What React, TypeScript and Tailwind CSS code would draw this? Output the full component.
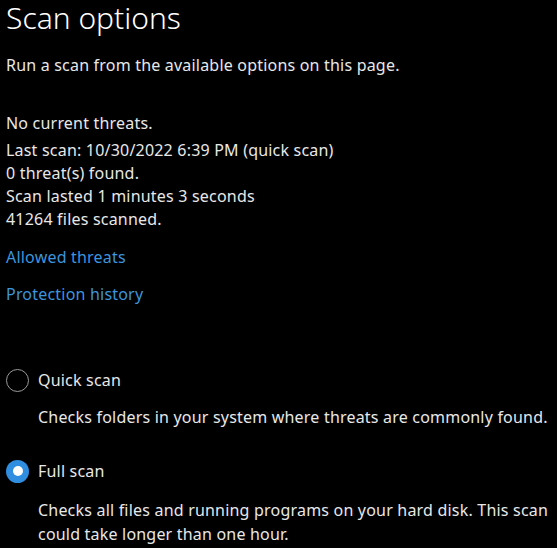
export default function App() {
  return (
    <div
      className="h-[548px] w-[557px] overflow-hidden bg-black pl-[6px] text-[16px] leading-[23px] tracking-[0.2px] text-[#e8e8e8]"
      style={{ fontFamily: '"Noto Sans", "Open Sans", sans-serif' }}
    >
      <h1 className="pt-[1px] text-[30px] font-light leading-[34px] tracking-normal text-white">Scan options</h1>
      <p className="mt-[19px]">Run a scan from the available options on this page.</p>

      <p className="mt-[35px]">No current threats.</p>
      <div className="mt-[4px]">
        <p>Last scan: 10/30/2022 6:39 PM (quick scan)</p>
        <p>0 threat(s) found.</p>
        <p>Scan lasted 1 minutes 3 seconds</p>
        <p>41264 files scanned.</p>
      </div>

      <a className="mt-[15px] block text-[#3c95dd]">Allowed threats</a>
      <a className="mt-[14px] block text-[#3c95dd]">Protection history</a>

      <label className="mt-[62px] flex h-[24px] items-center gap-[9px]">
        <span className="h-[23px] w-[23px] shrink-0 rounded-full border-[1.5px] border-[#9a9a9a]" />
        <span>Quick scan</span>
      </label>
      <p className="mt-[14px] pl-[32px]">Checks folders in your system where threats are commonly found.</p>

      <label className="mt-[30px] flex h-[24px] items-center gap-[9px]">
        <span className="flex h-[23px] w-[23px] shrink-0 items-center justify-center rounded-full bg-[#2f8ee0]">
          <span className="h-[10px] w-[10px] rounded-full bg-white" />
        </span>
        <span>Full scan</span>
      </label>
      <p className="mt-[15px] pl-[32px] pr-[4px] leading-[24px]">
        Checks all files and running programs on your hard disk. This scan could take longer than one hour.
      </p>
    </div>
  );
}
